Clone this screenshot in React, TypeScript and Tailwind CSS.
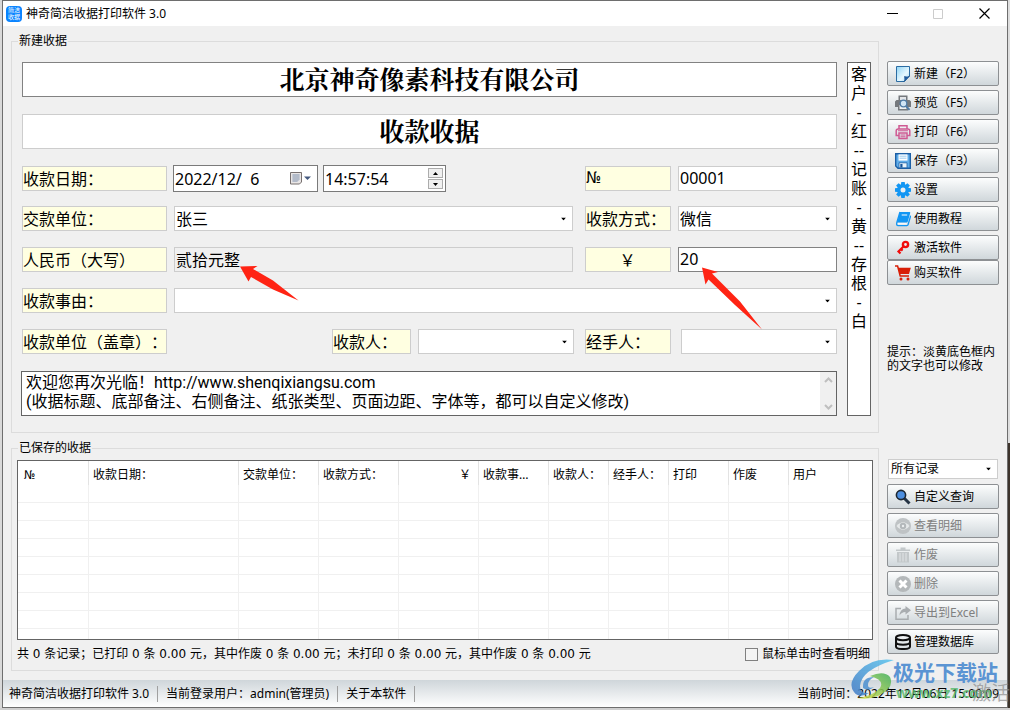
import type { ReactNode } from "react";

const INPUT = "h-[25px] min-w-0 border bg-white px-[1px] pb-[2px] text-base outline-none";

function YellowBox({ value, name, className = "w-[86px]" }: { value: string; name: string; className?: string }) {
  return (
    <input
      aria-label={name}
      defaultValue={value}
      className={`h-[25px] shrink-0 border border-[#cdcdcd] bg-[#ffffe1] pr-[1px] pb-[2px] text-base outline-none ${className}`}
    />
  );
}

function Combo({ name, value, className }: { name: string; value: string; className: string }) {
  return (
    <div className={`relative ${className}`}>
      <select
        aria-label={name}
        defaultValue={value}
        className="h-[25px] w-full appearance-none border border-[#cdcdcd] bg-white px-[1px] pb-[2px] text-base outline-none"
      >
        <option value={value}>{value}</option>
      </select>
      <Caret />
    </div>
  );
}

function Caret() {
  return (
    <svg className="pointer-events-none absolute top-1/2 right-[7px] h-[3px] w-[5px] -translate-y-1/2" viewBox="0 0 5 3" aria-hidden="true">
      <path d="M0 0h5L2.500 3z" fill="#000" />
    </svg>
  );
}

function Svg({ children }: { children: ReactNode }) {
  return (
    <svg className="size-4 shrink-0" viewBox="0 0 16 16" aria-hidden="true">
      {children}
    </svg>
  );
}

const gearTeeth = [0, 45, 90, 135, 180, 225, 270, 315];

const icons = {
  page: (
    <Svg>
      <defs>
        <linearGradient id="page" x1="0" y1="0" x2="1" y2="1">
          <stop offset="0" stopColor="#8fd4f5" />
          <stop offset=".6" stopColor="#e8f8ff" />
          <stop offset="1" stopColor="#9cd6f2" />
        </linearGradient>
      </defs>
      <path d="M1.500.5h13v9.500l-5 5.500h-8z" fill="url(#page)" stroke="#2b6ca3" />
      <path d="M9 15.500c1-1 1-3 .5-5 2 .8 4 .5 5-.5z" fill="#1f5fa6" stroke="#1a4f8c" strokeWidth=".7" />
    </Svg>
  ),
  preview: (
    <Svg>
      <path d="M3.500.500h9V5h2L16 6.500V12h-3v3.500H3V12H0V6.500L1.500 5h2z" fill="#75797d" />
      <path d="M5 2h6v3H5z" fill="#e3e6e9" />
      <path d="M4.500 10h7v4h-7z" fill="#eef1f3" />
      <circle cx="8.500" cy="8.500" r="3.300" fill="#cfe4f5" stroke="#4f7ba6" strokeWidth="1.300" />
      <path d="m11 11 3.500 3.800" stroke="#4f7ba6" strokeWidth="1.900" />
    </Svg>
  ),
  print: (
    <Svg>
      <g fill="none" stroke="#cf5a93" strokeWidth="1.500">
        <path d="M4 5V1.700h8V5" />
        <path d="M4 11.500H1.200V7q0-2 2-2h9.600q2 0 2 2v4.500H12" />
        <path d="M4 9h8v5.500H4z" />
      </g>
      <path d="M3 6.800h10M5.500 11h5M5.500 12.800h5" stroke="#cf5a93" strokeWidth="1.100" />
    </Svg>
  ),
  save: (
    <Svg>
      <path d="M.7.700h14.600v14.600H3L.7 13z" fill="#5fadea" stroke="#1c5fa5" strokeWidth="1.400" />
      <path d="M3.500 1.400h9v6.200h-9z" fill="#fff" />
      <path d="M4.500 3.200h7M4.500 5.200h7" stroke="#9ccbee" />
      <path d="M4 9.800h8v5H4z" fill="#e9f4fb" stroke="#1c5fa5" strokeWidth=".8" />
      <path d="M5.300 11h2.200v3.500H5.300z" fill="#17569b" />
    </Svg>
  ),
  gear: (
    <Svg>
      <g fill="#1296f3">
        {gearTeeth.map((a) => (
          <path key={a} d="M6.300 0h3.400l.6 4H5.700z" transform={`rotate(${a} 8 8)`} />
        ))}
        <circle cx="8" cy="8" r="5.800" />
      </g>
      <circle cx="8" cy="8" r="2.500" fill="#eceff1" />
    </Svg>
  ),
  book: (
    <Svg>
      <path d="M5 1h9.500q1 0 .7 1l-2.400 8.500q-.3 1-1.300 1H2.200z" fill="#1296f3" />
      <path d="M5 1 2 11q-1 3.600 1.200 3.600h8.600q1 0 1.300-1l2.600-9" fill="none" stroke="#1296f3" strokeWidth="1.400" />
      <path d="M6.700 4h5.500" stroke="#fff" />
      <path d="M2.700 12.800h9" stroke="#fff" strokeWidth="1.200" />
    </Svg>
  ),
  key: (
    <Svg>
      <circle cx="10.500" cy="4.500" r="2.600" fill="none" stroke="#f00c0c" strokeWidth="2.400" />
      <path d="m8.500 6.500-5.800 5.800M3.500 11.500l2 2M6 9l1.600 1.600" stroke="#f00c0c" strokeWidth="2.200" />
    </Svg>
  ),
  cart: (
    <Svg>
      <path d="M0 1h2.600l2.600 10H14" fill="none" stroke="#d81e06" strokeWidth="1.500" />
      <path d="M3 2.800h12.800L14 9H4.800z" fill="#d81e06" />
      <circle cx="6" cy="14" r="1.500" fill="#d81e06" />
      <circle cx="13" cy="14" r="1.500" fill="#d81e06" />
    </Svg>
  ),
  search: (
    <Svg>
      <path d="m9 9 5.500 5.500" stroke="#263445" strokeWidth="3" />
      <circle cx="6" cy="6" r="4.600" fill="#4d8fe0" stroke="#1c2733" strokeWidth="1.600" />
    </Svg>
  ),
  eye: (
    <Svg>
      <circle cx="8" cy="8" r="8" fill="#bfc3c5" />
      <path d="M1.500 8Q8 .5 14.500 8 8 15.500 1.500 8z" fill="#e6e9ea" />
      <circle cx="8" cy="8" r="3.200" fill="#b3b8ba" />
      <circle cx="8" cy="8" r="1.200" fill="#eceeef" />
    </Svg>
  ),
  trash: (
    <Svg>
      <path d="M1 2.500h14V4H1zM5.500.5h5v2h-5z" fill="#c3c8ca" />
      <path d="M2 5h12v10.500H2z" fill="#c3c8ca" />
      <path d="M5 6v8.500M8 6v8.500M11 6v8.500" stroke="#e2e5e7" />
    </Svg>
  ),
  remove: (
    <Svg>
      <circle cx="8" cy="8" r="8" fill="#b4b8ba" />
      <path d="m4.500 4.500 7 7M11.500 4.500l-7 7" stroke="#fff" strokeWidth="3" />
    </Svg>
  ),
  share: (
    <Svg>
      <path d="M6 3.500H1v10.800h12V10" fill="none" stroke="#a9adb0" strokeWidth="1.500" />
      <path d="M10.500 1 16 5.300l-5.500 4.200V7Q6.500 7 4.500 10.500 5 4 10.500 3.600z" fill="#a9adb0" />
    </Svg>
  ),
  database: (
    <Svg>
      <g fill="none" stroke="#111" strokeWidth="2">
        <ellipse cx="8" cy="3.600" rx="7" ry="2.600" />
        <path d="M1 3.600v8.800c0 3.500 14 3.500 14 0V3.600M1 8c0 3.500 14 3.500 14 0" />
      </g>
    </Svg>
  ),
};

function ToolButton({ icon, children, disabled = false }: { icon: keyof typeof icons; children: ReactNode; disabled?: boolean }) {
  return (
    <button
      type="button"
      disabled={disabled}
      className="flex h-[25px] w-full items-center gap-[3px] rounded-xs border border-[#8d9093] bg-linear-to-b from-[#fcfdfd] to-[#d0d7db] pl-[7px] whitespace-nowrap disabled:text-[#808080]"
    >
      {icons[icon]}
      <span>{children}</span>
    </button>
  );
}

function TitleBar() {
  return (
    <header className="flex h-[25px] items-center bg-white pl-[3px]">
      <span aria-hidden="true" className="flex size-4 flex-col items-center justify-center rounded-sm bg-[#0a84ff] text-[6px] leading-[7px] text-white">
        <span>简洁</span>
        <span>收据</span>
      </span>
      <h1 className="ml-1 flex-1">神奇简洁收据打印软件 3.0</h1>
      <button type="button" aria-label="最小化" className="flex h-full w-[46px] items-center justify-center">
        <svg className="h-[11px] w-[11px]" viewBox="0 0 11 11"><path d="M0 5.500h11" stroke="#000" /></svg>
      </button>
      <button type="button" disabled aria-label="最大化" className="flex h-full w-[46px] items-center justify-center">
        <svg className="h-[10px] w-[10px]" viewBox="0 0 10 10"><path d="M.5.500h9v9h-9z" fill="none" stroke="#ccc" /></svg>
      </button>
      <button type="button" aria-label="关闭" className="flex h-full w-[46px] items-center justify-center">
        <svg className="h-[11px] w-[11px]" viewBox="0 0 11 11"><path d="m.5.500 10 10M10.500.500l-10 10" stroke="#000" strokeWidth="1.200" /></svg>
      </button>
    </header>
  );
}

function DateField() {
  return (
    <div className="flex h-[27px] w-[145px] shrink-0 items-center border border-[#7a7a7a] bg-white pr-[6px]">
      <input aria-label="收款日期" defaultValue="2022/12/  6" className="min-w-0 flex-1 pl-[1px] text-base outline-none" />
      <svg className="h-[13px] w-[21px]" viewBox="0 0 21 13" aria-hidden="true">
        <path d="M.5.500h11v9.500l-2 2h-9z" fill="#e9e6e6" stroke="#77706f" />
        <path d="M2 3h8M2 5h8M2 7h8M2 9h6M4 2v8M6 2v8M8 2v7" stroke="#8e9bb5" strokeWidth=".7" />
        <path d="M14 4.500h7L17.500 8z" fill="#44597f" />
      </svg>
    </div>
  );
}

function TimeField() {
  return (
    <div className="ml-[5px] flex h-[27px] w-[123px] shrink-0 items-center border border-[#7a7a7a] bg-white pr-[2px]">
      <input aria-label="收款时间" defaultValue="14:57:54" className="min-w-0 flex-1 pl-[1px] text-base outline-none" />
      <div className="flex w-[15px] flex-col gap-px">
        <button type="button" aria-label="增加" className="flex h-[10px] items-center justify-center border border-[#acacac] bg-[#f0f0f0]">
          <svg className="h-[3px] w-[5px]" viewBox="0 0 5 3"><path d="M0 3h5L2.500 0z" /></svg>
        </button>
        <button type="button" aria-label="减少" className="flex h-[10px] items-center justify-center border border-[#acacac] bg-[#f0f0f0]">
          <svg className="h-[3px] w-[5px]" viewBox="0 0 5 3"><path d="M0 0h5L2.500 3z" /></svg>
        </button>
      </div>
    </div>
  );
}

function ReceiptForm() {
  return (
    <fieldset className="mt-[7px] min-w-0 border border-[#dcdcdc] pr-[7px] pb-4 pl-[10px]">
      <legend className="-ml-1 h-4 px-[1px] leading-4">新建收据</legend>
      <div className="mt-[13px] flex gap-[10px]">
        <div className="flex min-w-0 flex-1 flex-col">
          <input aria-label="公司名称" defaultValue="北京神奇像素科技有限公司" className="h-[35px] w-full border border-[#828282] bg-white pb-1 text-center font-['Liberation_Serif','Noto_Serif_CJK_SC','Noto_Sans_CJK_SC',serif] text-[25px] font-bold outline-none" />
          <input aria-label="收据标题" defaultValue="收款收据" className="mt-[17px] h-[35px] w-full border border-[#cdcdcd] bg-white pb-1 text-center font-['Liberation_Serif','Noto_Serif_CJK_SC','Noto_Sans_CJK_SC',serif] text-[25px] font-bold outline-none" />

          <div className="mt-4 flex items-center">
            <YellowBox name="日期标签" value="收款日期：" className="mr-[6px] w-[145px]" />
            <DateField />
            <TimeField />
            <div className="flex-1" />
            <YellowBox name="编号标签" value="№" className="w-[86px] font-['DejaVu_Sans_Condensed','DejaVu_Sans',sans-serif]" />
            <input aria-label="编号" defaultValue="00001" className={`${INPUT} ml-[7px] w-[159px] border-[#cdcdcd]`} />
          </div>

          <div className="mt-[14px] flex">
            <YellowBox name="交款单位标签" value="交款单位：" className="w-[145px]" />
            <Combo name="交款单位" value="张三" className="mr-3 ml-[7px] flex-1" />
            <YellowBox name="收款方式标签" value="收款方式：" />
            <Combo name="收款方式" value="微信" className="ml-[7px] w-[159px]" />
          </div>

          <div className="mt-4 flex">
            <YellowBox name="大写金额标签" value="人民币（大写）" className="w-[145px]" />
            <input aria-label="人民币大写" readOnly value="贰拾元整" className="mr-3 ml-[7px] h-[25px] min-w-0 flex-1 border border-[#cdcdcd] bg-[#f0f0f0] px-[1px] pb-[2px] text-base outline-none" />
            <YellowBox name="金额标签" value="￥" className="w-[86px] text-center" />
            <input aria-label="金额" defaultValue="20" className={`${INPUT} ml-[7px] w-[159px] border-[#828282]`} />
          </div>

          <div className="mt-4 flex">
            <YellowBox name="事由标签" value="收款事由：" className="w-[145px]" />
            <Combo name="收款事由" value="" className="ml-[7px] flex-1" />
          </div>

          <div className="mt-4 flex">
            <YellowBox name="收款单位标签" value="收款单位（盖章）：" className="w-[145px]" />
            <div className="flex-1" />
            <YellowBox name="收款人标签" value="收款人：" className="w-[79px]" />
            <Combo name="收款人" value="" className="mr-[11px] ml-[7px] w-[156px]" />
            <YellowBox name="经手人标签" value="经手人：" />
            <Combo name="经手人" value="" className="ml-[10px] w-[156px]" />
          </div>

          <div className="mt-[17px] -ml-px flex h-[45px] border border-[#646464] bg-white">
            <textarea
              aria-label="底部备注"
              wrap="off"
              defaultValue={"欢迎您再次光临！http://www.shenqixiangsu.com\n(收据标题、底部备注、右侧备注、纸张类型、页面边距、字体等，都可以自定义修改)"}
              className="min-w-0 flex-1 resize-none overflow-hidden px-[4px] pt-[1px] font-[Roboto,'Noto_Sans_CJK_SC',sans-serif] text-base leading-[19px] outline-none"
            />
            <div className="flex w-4 flex-col items-center justify-between bg-[#f0f0f0] py-[5px]" aria-hidden="true">
              <svg className="h-[6px] w-[9px]" viewBox="0 0 9 6"><path d="m1 5 3.500-3.500L8 5" fill="none" stroke="#bfbfbf" strokeWidth="2" /></svg>
              <svg className="h-[6px] w-[9px]" viewBox="0 0 9 6"><path d="m1 1 3.500 3.500L8 1" fill="none" stroke="#bfbfbf" strokeWidth="2" /></svg>
            </div>
          </div>
        </div>

        <textarea
          aria-label="右侧备注"
          defaultValue={"客\n户\n-\n红\n--\n记\n账\n-\n黄\n--\n存\n根\n-\n白"}
          className="w-6 shrink-0 resize-none overflow-hidden border border-[#646464] bg-white pt-[2px] text-center text-base leading-[19px] outline-none"
        />
      </div>
    </fieldset>
  );
}

const columns = [
  { title: "№", width: "w-[70px]" },
  { title: "收款日期：", width: "w-[150px]" },
  { title: "交款单位：", width: "w-[80px]" },
  { title: "收款方式：", width: "w-[80px]" },
  { title: "￥", width: "w-[80px]" },
  { title: "收款事…", width: "w-[70px]" },
  { title: "收款人：", width: "w-[60px]" },
  { title: "经手人：", width: "w-[60px]" },
  { title: "打印", width: "w-[60px]" },
  { title: "作废", width: "w-[60px]" },
  { title: "用户", width: "w-[60px]" },
  { title: "", width: "w-auto" },
];

function SavedReceipts() {
  return (
    <fieldset className="mt-[7px] min-w-0 border border-[#dcdcdc] px-[5px] pb-[6px]">
      <legend className="ml-[1px] h-4 px-[1px] leading-4">已保存的收据</legend>
      <div className="mt-[4px] border border-[#646464] bg-white">
        <table className="w-full table-fixed border-separate border-spacing-0">
          <thead>
            <tr className="h-6">
              {columns.map((c) => (
                <th
                  key={c.title}
                  className={`${c.width} border-l border-[#e3e3e3] p-0 pt-[3px] pl-[4px] text-left font-normal whitespace-nowrap first:border-l-0 first:pl-[6px] first:font-['DejaVu_Sans_Condensed','DejaVu_Sans',sans-serif] nth-5:pr-[7px] nth-5:text-right`}
                >
                  {c.title}
                </th>
              ))}
            </tr>
          </thead>
          <tbody>
            {Array.from({ length: 9 }, (_, r) => (
              <tr key={r} className="h-[18px] last:h-[10px]">
                {columns.map((c) => (
                  <td key={c.title} className={`border-l border-[#f0f0f0] p-0 first:border-l-0 ${r < 8 ? "border-b" : ""}`} />
                ))}
              </tr>
            ))}
          </tbody>
        </table>
      </div>
      <div className="mt-1 flex h-5 items-center justify-between">
        <p className="font-['DejaVu_Sans','Noto_Sans_CJK_SC',sans-serif]">共 0 条记录；已打印 0 条 0.00 元，其中作废 0 条 0.00 元；未打印 0 条 0.00 元，其中作废 0 条 0.00 元</p>
        <label className="flex items-center gap-1 pr-[3px]">
          <input type="checkbox" className="size-[13px] appearance-none border border-[#808080] bg-[#f4f4f4]" />
          鼠标单击时查看明细
        </label>
      </div>
    </fieldset>
  );
}

function Sidebar() {
  return (
    <aside className="flex w-28 shrink-0 flex-col pt-[35px]">
      <div className="flex flex-col gap-1">
        <ToolButton icon="page">新建（F2）</ToolButton>
        <ToolButton icon="preview">预览（F5）</ToolButton>
        <ToolButton icon="print">打印（F6）</ToolButton>
        <ToolButton icon="save">保存（F3）</ToolButton>
        <ToolButton icon="gear">设置</ToolButton>
        <ToolButton icon="book">使用教程</ToolButton>
        <div>
          <ToolButton icon="key">激活软件</ToolButton>
          <ToolButton icon="cart">购买软件</ToolButton>
        </div>
      </div>
      <p className="mt-[60px] leading-[14px]">提示：淡黄底色框内的文字也可以修改</p>
      <div className="flex-1" />
      <div className="mb-[26px] flex flex-col gap-1">
        <div className="relative mx-px mb-px">
          <select aria-label="记录范围" className="block h-5 w-full appearance-none border border-[#cdcdcd] bg-white px-[2px] outline-none">
            <option>所有记录</option>
          </select>
          <Caret />
        </div>
        <ToolButton icon="search">自定义查询</ToolButton>
        <ToolButton icon="eye" disabled>查看明细</ToolButton>
        <ToolButton icon="trash" disabled>作废</ToolButton>
        <ToolButton icon="remove" disabled>删除</ToolButton>
        <ToolButton icon="share" disabled>导出到Excel</ToolButton>
        <ToolButton icon="database">管理数据库</ToolButton>
      </div>
    </aside>
  );
}

function StatusBar() {
  return (
    <footer className="flex h-[27px] items-center bg-linear-to-b from-[#cfd6da] to-white pr-2 pl-[6px]">
      <span className="pr-2">神奇简洁收据打印软件 3.0</span>
      <span className="border-l border-[#a0a0a0] px-2">当前登录用户：admin(管理员)</span>
      <span className="border-x border-[#a0a0a0] px-2">关于本软件</span>
      <span className="ml-auto">当前时间：2022年12月06日 15:00:09</span>
    </footer>
  );
}

function Arrows() {
  return (
    <svg className="pointer-events-none absolute top-0 left-0 h-[710px] w-[1010px]" viewBox="0 0 1010 710" aria-hidden="true">
      <g fill="#ff2414">
        <path d="M240 266.500 257.500 266 253 269 273 280.500 298.500 300.500 273 289.500 251 277 248.500 281.500z" />
        <path d="M702 267.500 718 272 712 273.500 740 301.500 762 329.500 735 305 708.500 279.500 705.500 284.500z" />
      </g>
    </svg>
  );
}

function Watermark() {
  return (
    <div className="pointer-events-none absolute right-0 bottom-0 flex h-[52px] w-[160px] overflow-hidden">
      <svg className="mt-[1px] h-11 w-11 shrink-0" viewBox="0 0 44 44" aria-hidden="true">
        <defs>
          <linearGradient id="sky" x1="1" y1="0" x2="0" y2="1">
            <stop offset="0" stopColor="#58c4ee" />
            <stop offset="1" stopColor="#3f78c4" />
          </linearGradient>
          <linearGradient id="leaf" x1="0" y1="1" x2="1" y2="0">
            <stop offset="0" stopColor="#e2e24a" />
            <stop offset="1" stopColor="#3fae5a" />
          </linearGradient>
        </defs>
        <path d="M44 1Q22-2 9 12-3 24 4 33q5 7 15 1-9 1-9-7Q11 11 44 1z" fill="url(#sky)" opacity=".85" />
        <path d="M13 29q-1-11 11-11-6 3-6 8 0 4 6 2-6 5-11 1z" fill="#4b8fd0" opacity=".85" />
        <path d="M20 17q14-6 20 1 5 11-12 19-10 4-21 2 16-2 23-10 5-8-10-12z" fill="url(#leaf)" opacity=".85" />
      </svg>
      <div className="relative flex-1 font-bold whitespace-nowrap">
        <div className="-ml-[1px] text-[21px] leading-7 text-[#5b94d3]">极光下载站</div>
        <div className="-mt-[1px] ml-[2px] text-sm leading-4 text-[#50b765]/80">www.xz7.com</div>
        <div className="absolute top-[23px] left-[78px] text-[19px] leading-6 font-normal text-[#8c8c8c]/70">激活</div>
      </div>
    </div>
  );
}

export default function App() {
  return (
    <div className="relative flex min-h-screen overflow-hidden bg-[#cfcfcf] pb-[2px] font-['Noto_Sans','Noto_Sans_CJK_SC',sans-serif] text-xs text-black [text-spacing-trim:space-all]">
      <div className="w-[2px] bg-[#d9d9d9]" />
      <main className="flex min-w-0 flex-1 flex-col border border-[#6e6e6e] bg-[#f0f0f0]">
        <TitleBar />
        <div className="flex flex-1 gap-2 px-2">
          <div className="min-w-0 flex-1 pb-[9px]">
            <ReceiptForm />
            <SavedReceipts />
          </div>
          <Sidebar />
        </div>
        <StatusBar />
      </main>
      <div className="flex w-[2px] flex-col">
        <div className="flex-5 bg-[#dedede]" />
        <div className="flex-3 bg-[#3d342c]" />
      </div>
      <Arrows />
      <Watermark />
    </div>
  );
}
